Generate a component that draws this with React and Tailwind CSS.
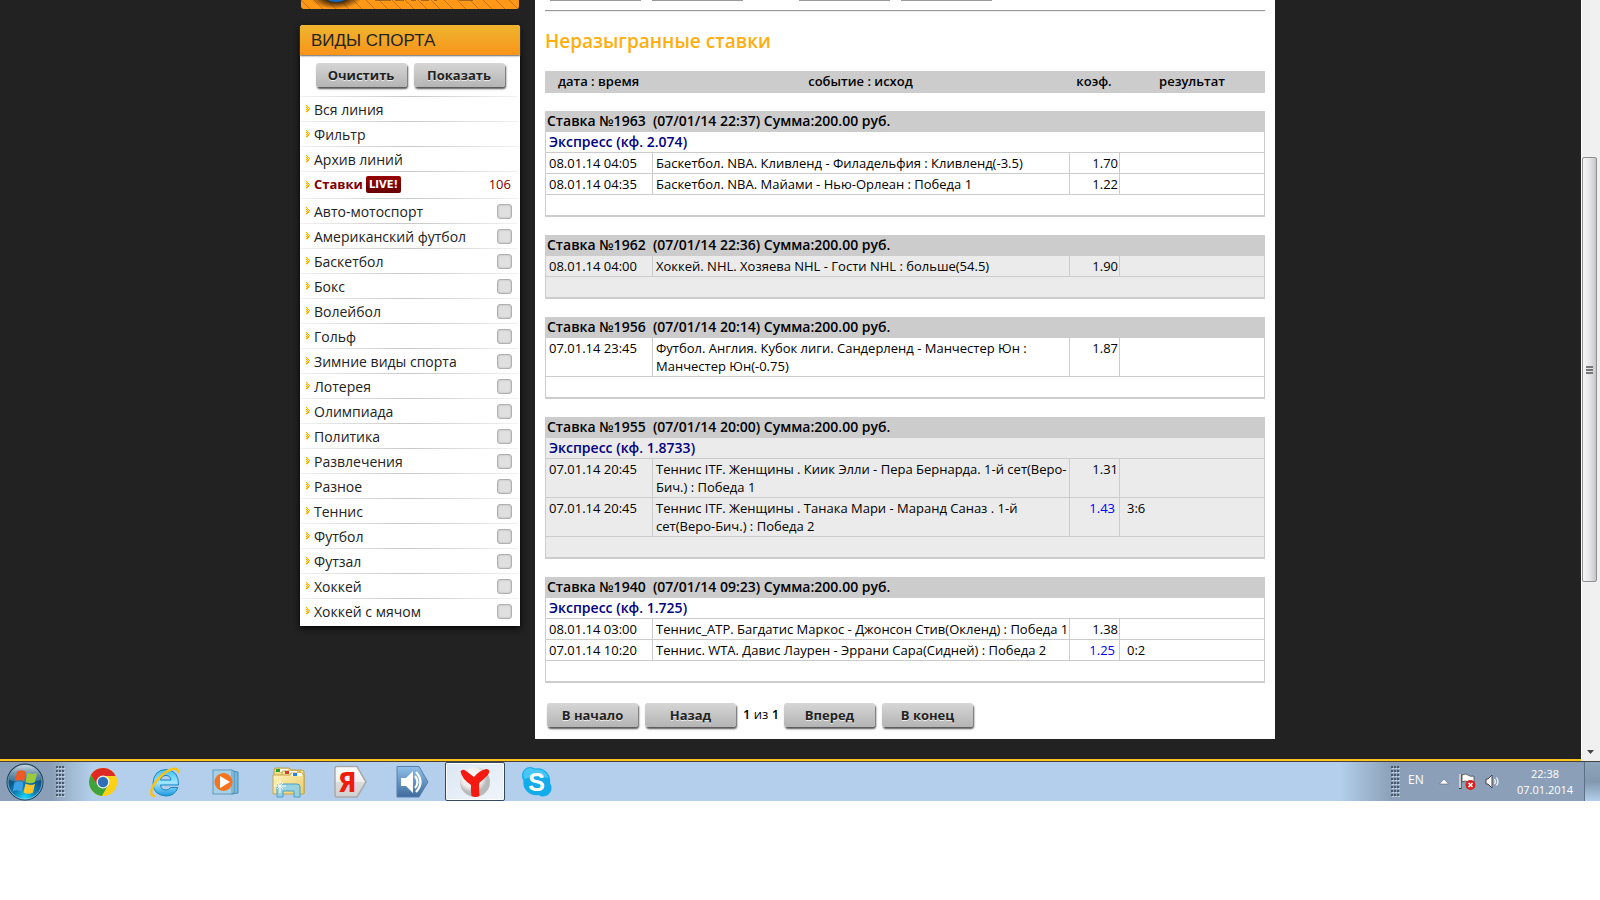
const MENU = ["Вся линия", "Фильтр", "Архив линий"];

const SPORTS = [
  "Авто-мотоспорт", "Американский футбол", "Баскетбол", "Бокс", "Волейбол", "Гольф",
  "Зимние виды спорта", "Лотерея", "Олимпиада", "Политика", "Развлечения", "Разное",
  "Теннис", "Футбол", "Футзал", "Хоккей", "Хоккей с мячом",
];

const BETS = [
  {
    id: 1963, date: "07/01/14 22:37", express: "2.074",
    rows: [
      { time: "08.01.14 04:05", event: "Баскетбол. NBA. Кливленд - Филадельфия : Кливленд(-3.5)", k: "1.70" },
      { time: "08.01.14 04:35", event: "Баскетбол. NBA. Майами - Нью-Орлеан : Победа 1", k: "1.22" },
    ],
  },
  {
    id: 1962, date: "07/01/14 22:36",
    rows: [{ time: "08.01.14 04:00", event: "Хоккей. NHL. Хозяева NHL - Гости NHL : больше(54.5)", k: "1.90" }],
  },
  {
    id: 1956, date: "07/01/14 20:14",
    rows: [{ time: "07.01.14 23:45", event: ["Футбол. Англия. Кубок лиги. Сандерленд - Манчестер Юн :", "Манчестер Юн(-0.75)"], k: "1.87" }],
  },
  {
    id: 1955, date: "07/01/14 20:00", express: "1.8733",
    rows: [
      { time: "07.01.14 20:45", event: ["Теннис ITF. Женщины . Киик Элли - Пера Бернарда. 1-й сет(Веро-", "Бич.) : Победа 1"], k: "1.31" },
      { time: "07.01.14 20:45", event: ["Теннис ITF. Женщины . Танака Мари - Маранд Саназ . 1-й", "сет(Веро-Бич.) : Победа 2"], k: "1.43", result: "3:6" },
    ],
  },
  {
    id: 1940, date: "07/01/14 09:23", express: "1.725",
    rows: [
      { time: "08.01.14 03:00", event: "Теннис_ATP. Багдатис Маркос - Джонсон Стив(Окленд) : Победа 1", k: "1.38" },
      { time: "07.01.14 10:20", event: "Теннис. WTA. Давис Лаурен - Эррани Сара(Сидней) : Победа 2", k: "1.25", result: "0:2" },
    ],
  },
];

function GreyButton({ children }) {
  return (
    <button
      type="button"
      className="h-6 w-[91px] rounded-[3px] bg-linear-to-b from-[#d6d6d6] to-[#b4b4b4] text-center text-[13px] leading-6 font-bold text-[#222] shadow-[1px_2px_2px_#555] [text-shadow:0_1px_0_#eee]"
    >
      {children}
    </button>
  );
}

function Marker() {
  return (
    <svg width="5" height="8" viewBox="0 0 5 8" className="shrink-0" aria-hidden="true">
      <path d="M0 0h1v1h1v1h1v1h1v2h-1v1h-1v1h-1v1h-1z" fill="#ffe9ae" />
      <path
        d="M0 0h1v1h-1zM1 1h1v1h-1zM0 2h1v1h-1zM2 2h1v1h-1zM1 3h1v1h-1zM3 3h1v1h-1zM0 4h1v1h-1zM2 4h1v1h-1zM1 5h1v1h-1zM0 6h1v1h-1zM2 5h1v1h-1zM1 6h1v1h-1z"
        fill="#f9b000"
      />
    </svg>
  );
}

function Divider() {
  return <div className="mr-[2px] h-px bg-linear-to-r from-[#f2f2f2] via-[#c8c8c8] to-[#f2f2f2]" />;
}

function Banner() {
  return (
    <svg className="mx-px block h-[9px] w-[218px]" viewBox="0 0 218 9" aria-hidden="true">
      <defs>
        <pattern id="stripes" width="13" height="13" patternUnits="userSpaceOnUse">
          <path d="M-1 -1L14 14" stroke="#c97410" strokeWidth="1" />
        </pattern>
        <radialGradient id="halo">
          <stop offset="0.4" stopColor="#3a2203" />
          <stop offset="1" stopColor="#3a2203" stopOpacity="0" />
        </radialGradient>
        <clipPath id="bannerClip"><path d="M0 -9h218V6a3 3 0 0 1-3 3H3a3 3 0 0 1-3-3z" /></clipPath>
      </defs>
      <g clipPath="url(#bannerClip)">
        <rect width="218" height="9" fill="#ff9717" />
        <rect width="218" height="9" fill="url(#stripes)" />
        <ellipse cx="35" cy="-3" rx="26" ry="12" fill="url(#halo)" />
        <ellipse cx="35" cy="-11" rx="17" ry="13" fill="#1268c4" />
        <path d="M74 0h16M94 0h9M110 0h5M120 0h8M133 0h3M158 0h14" stroke="#8a5a1c" strokeWidth="1.500" />
      </g>
    </svg>
  );
}

function Sidebar() {
  return (
    <aside className="w-[220px] shrink-0">
      <Banner />
      <div className="mt-4 rounded-t-[3px] bg-white shadow-[0_2px_6px_#000]">
        <h2 className="h-[30px] rounded-t-[3px] bg-linear-to-b from-[#edb52e] to-[#f8941a] pl-[11px] font-['Liberation_Sans',sans-serif] text-[17px] leading-8 text-[#222] shadow-[0_1px_2px_#666]">
          ВИДЫ СПОРТА
        </h2>
        <div className="flex h-[41px] items-start justify-center gap-[7px] pt-2">
          <GreyButton>Очистить</GreyButton>
          <GreyButton>Показать</GreyButton>
        </div>
        <nav className="text-[14px] text-[#222]">
          {MENU.map((item) => (
            <div key={item}>
              <Divider />
              <a href="#" className="flex h-6 items-center gap-[3px] pl-[6px]">
                <Marker />
                {item}
              </a>
            </div>
          ))}
          <Divider />
          <a href="#" className="flex h-[26px] items-center gap-[3px] pr-[9px] pb-px pl-[6px] text-[13px] font-bold text-[#800000]">
            <Marker />
            Ставки
            <span className="h-[17px] rounded-[2px] bg-linear-to-b from-[#900] to-[#600] px-[3px] font-['DejaVu_Sans',sans-serif] text-[10px] leading-[17px] font-bold text-white">
              LIVE!
            </span>
            <span className="ml-auto font-normal">106</span>
          </a>
          {SPORTS.map((sport) => (
            <div key={sport}>
              <Divider />
              <label className="flex h-6 items-center gap-[3px] pr-2 pl-[6px]">
                <Marker />
                {sport}
                <input
                  type="checkbox"
                  className="ml-auto size-[15px] appearance-none rounded-[3px] border border-[#b0b0b0] bg-[#e0e0e0] shadow-[inset_0_0_2px_#aaa]"
                />
              </label>
            </div>
          ))}
          <div className="h-[3px]" />
        </nav>
      </div>
    </aside>
  );
}

function Bet({ bet, shaded }) {
  const bg = shaded ? "bg-[#ebebeb]" : "bg-white";
  return (
    <tbody className={bg}>
      <tr className="h-[18px] bg-white">
        <td colSpan={4} />
      </tr>
      <tr className="h-[21px] bg-[#ccc] text-[14px]">
        <th colSpan={4} className="pb-px pl-[2px] text-left font-semibold whitespace-pre">
          {`Ставка №${bet.id}  (${bet.date}) Сумма:200.00 руб.`}
        </th>
      </tr>
      {bet.express && (
        <tr className="h-[21px] text-[14px]">
          <td colSpan={4} className="border-x border-b border-[#ccc] pl-[3px] font-semibold text-[#000080]">
            Экспресс (кф. {bet.express})
          </td>
        </tr>
      )}
      {bet.rows.map((row) => (
        <tr key={row.time + row.event} className="align-top">
          <td className="border-b border-l border-[#ccc] py-px pl-[3px]">{row.time}</td>
          <td className="border-b border-l border-[#ccc] py-px pl-[3px] whitespace-nowrap">
            {[].concat(row.event).map((line) => (
              <div key={line}>{line}</div>
            ))}
          </td>
          <td className={`border-b border-l border-[#ccc] py-px text-right ${row.result ? "pr-1 text-[#0000ff]" : "pr-px"}`}>
            {row.k}
          </td>
          <td className="border-x border-b border-[#ccc] py-px pl-[7px]">{row.result}</td>
        </tr>
      ))}
      <tr className="h-[22px]">
        <td colSpan={4} className="border-x border-b-2 border-[#ccc]" />
      </tr>
    </tbody>
  );
}

function Main() {
  return (
    <main className="w-[740px] shrink-0 bg-white px-[10px] pb-3 text-black">
      <div className="flex pl-[5px]" aria-hidden="true">
        <span className="mr-[11px] h-px w-[91px] bg-[#999]" />
        <span className="mr-14 h-px w-[91px] bg-[#999]" />
        <span className="mr-[11px] h-px w-[91px] bg-[#999]" />
        <span className="h-px w-[91px] bg-[#999]" />
      </div>
      <hr className="mt-[9px] h-[2px] border-t border-b border-t-[#999] border-b-[#eee]" />
      <h1 className="mt-4 mb-4 h-[27px] text-[19px] leading-[27px] font-semibold text-[#ffae0d]">Неразыгранные ставки</h1>
      <table className="w-full table-fixed border-separate border-spacing-0 text-[13px] leading-[18px]">
        <colgroup>
          <col className="w-[107px]" />
          <col />
          <col className="w-[50px]" />
          <col className="w-[146px]" />
        </colgroup>
        <thead>
          <tr className="h-[22px] bg-[#ccc]">
            <th className="pb-[2px] font-semibold">дата : время</th>
            <th className="pb-[2px] font-semibold">событие : исход</th>
            <th className="pb-[2px] font-semibold">коэф.</th>
            <th className="pb-[2px] font-semibold">результат</th>
          </tr>
        </thead>
        {BETS.map((bet, i) => (
          <Bet key={bet.id} bet={bet} shaded={i % 2 === 1} />
        ))}
      </table>
      <div className="mt-5 flex items-center gap-[7px] pl-[2px] text-[13px]">
        <GreyButton>В начало</GreyButton>
        <GreyButton>Назад</GreyButton>
        <span className="w-[34px] text-center whitespace-nowrap">
          <b className="font-semibold">1</b> из <b className="font-semibold">1</b>
        </span>
        <GreyButton>Вперед</GreyButton>
        <GreyButton>В конец</GreyButton>
      </div>
    </main>
  );
}

function Scrollbar() {
  return (
    <div className="flex w-[19px] shrink-0 flex-col border-l border-white bg-[#f0f0f0] pt-[157px] pb-[3px]">
      <div className="flex h-[425px] w-[15px] flex-col items-center justify-center gap-px rounded-[2px] border border-[#8f8f8f] bg-linear-to-r from-[#f7f7f7] via-[#e6e6e8] to-[#c4c4cb]">
        <span className="h-[2px] w-[7px] bg-[#777]" />
        <span className="h-[2px] w-[7px] bg-[#777]" />
        <span className="h-[2px] w-[7px] bg-[#777]" />
      </div>
      <svg className="mt-auto ml-[5px]" width="8" height="8" viewBox="0 0 8 8" aria-hidden="true">
        <path d="M0 0h7L3.500 4z" fill="#444" />
      </svg>
    </div>
  );
}

function Grip() {
  return (
    <svg width="9" height="31" viewBox="0 0 9 31" aria-hidden="true">
      <defs>
        <pattern id="dots" width="3" height="4" patternUnits="userSpaceOnUse">
          <rect width="2" height="2" fill="#4a5968" />
          <rect x="1" y="2" width="2" height="1" fill="#c5d2df" />
        </pattern>
      </defs>
      <rect width="9" height="31" fill="url(#dots)" />
    </svg>
  );
}

function StartOrb() {
  return (
    <svg width="38" height="38" viewBox="0 0 38 38" aria-hidden="true">
      <defs>
        <radialGradient id="orb" cx="0.5" cy="0.95" r="0.8">
          <stop offset="0" stopColor="#15e0ff" />
          <stop offset="0.4" stopColor="#0d7db4" />
          <stop offset="1" stopColor="#0b3b60" />
        </radialGradient>
        <linearGradient id="orbGloss" x2="0" y2="1">
          <stop offset="0" stopColor="#dfeaf2" stopOpacity="0.9" />
          <stop offset="1" stopColor="#7fa5c0" stopOpacity="0.35" />
        </linearGradient>
      </defs>
      <circle cx="19" cy="19" r="18" fill="url(#orb)" stroke="#1c3b55" />
      <circle cx="19" cy="19" r="17" fill="none" stroke="#a5cbe2" strokeOpacity="0.7" />
      <path d="M3 17a16 15 0 0 1 32 0q-16 5-32 0z" fill="url(#orbGloss)" />
      <path d="M11 8.500q5-2.500 9 .5l-2 9.500q-4-2.500-9-.5z" fill="#ee5a24" />
      <path d="M21.500 9.500q4 2.500 9.500.5l-2 9q-5 2.500-9.500 0z" fill="#9acb3c" />
      <path d="M8.500 19.500q5-2 9 .5l-2 9q-4-3-9-.5z" fill="#3aa0e8" />
      <path d="M19.500 20.500q4.500 2.500 9.500.5l-2 8.500q-5 2.500-9.500 0z" fill="#ffc62a" />
    </svg>
  );
}

function ChromeIcon() {
  return (
    <svg width="30" height="30" viewBox="0 0 30 30" aria-hidden="true">
      <circle cx="15" cy="15" r="14" fill="#fdd302" />
      <path d="M2.900 8A14 14 0 0 1 27.600 9H15L9 18z" fill="#dd2a22" />
      <path d="M2.900 8A14 14 0 0 0 14 29l6.500-11H9.500z" fill="#3fa33c" />
      <path d="M14 29a14 14 0 0 0 13.600-20H15l5.500 9z" fill="#fcd116" />
      <circle cx="15" cy="15" r="6.500" fill="#f3f3f3" />
      <circle cx="15" cy="15" r="5.200" fill="#2f6fb8" />
    </svg>
  );
}

function ExplorerEIcon() {
  return (
    <svg width="32" height="32" viewBox="0 0 32 32" aria-hidden="true">
      <defs>
        <linearGradient id="ie" x2="0" y2="1">
          <stop offset="0" stopColor="#3ec0f4" />
          <stop offset="0.5" stopColor="#a0e6ff" />
          <stop offset="1" stopColor="#1a9ae0" />
        </linearGradient>
      </defs>
      <path d="M29.500 19H11.500q.5 5 5.500 5 3 0 4.500-2.500h7.300Q26 30 17 30 4 29 4 17 5 4 17 3.500 30 4.500 29.500 19zM11.500 14H22q-.5-4.500-5-4.500T11.500 14z" fill="url(#ie)" stroke="#1684c4" />
      <path d="M6 30C-1 31 2 20 11 11S30 0 29.500 7" fill="none" stroke="#f6c21c" strokeWidth="2.500" />
    </svg>
  );
}

function PlayerIcon() {
  return (
    <svg width="30" height="28" viewBox="0 0 30 28" aria-hidden="true">
      <path d="M20 3l6 1v21l-6 1z" fill="#79b7da" stroke="#4b8fb5" />
      <path d="M18 2l4 1v22l-4 1z" fill="#a9d8ee" stroke="#4b8fb5" />
      <rect x="1" y="2" width="19" height="24" fill="#a5d0e6" stroke="#6299b8" />
      <circle cx="11.500" cy="14" r="9" fill="#f4731c" />
      <path d="M8 8v12l10-6z" fill="#fff" />
    </svg>
  );
}

function FolderIcon() {
  return (
    <svg width="34" height="32" viewBox="0 0 34 32" aria-hidden="true">
      <defs>
        <linearGradient id="folder" x2="1" y2="1">
          <stop offset="0" stopColor="#fdf3bf" />
          <stop offset="1" stopColor="#ecce66" />
        </linearGradient>
      </defs>
      <path d="M2 27V4q0-2 2-2h13l2 2h11q2 0 2 2v21z" fill="#f1dc8c" stroke="#bf9f45" />
      <rect x="4" y="3" width="12" height="3" fill="#fff" />
      <rect x="4" y="3" width="4" height="3" fill="#1fa51f" />
      <path d="M10 9V6q0-1 1-1h17v4" fill="#f6e5a0" stroke="#bf9f45" />
      <rect x="13" y="5" width="12" height="3" fill="#fff" />
      <rect x="13" y="5" width="4" height="3" fill="#d8402b" />
      <path d="M1 9h17l1-2h11l2 2v19H1z" fill="url(#folder)" stroke="#c4a44a" />
      <rect x="20" y="7" width="10" height="3" fill="#fff" />
      <rect x="21" y="7" width="4" height="3" fill="#2288dd" />
      <path d="M5 31V21q0-3 3-3h17q3 0 3 3v10h-6v-6H11v6z" fill="#8fd0ea" fillOpacity="0.900" stroke="#4c9fc4" />
      <path d="M8 14v13M2 20h12M5 17l6 6M11 17l-6 6" stroke="#fff" strokeWidth="1" />
    </svg>
  );
}

function YandexTagIcon() {
  return (
    <svg width="34" height="34" viewBox="0 0 34 34" aria-hidden="true">
      <defs>
        <linearGradient id="tag" x2="0" y2="1">
          <stop offset="0" stopColor="#fff" />
          <stop offset="0.5" stopColor="#f0f0f0" />
          <stop offset="0.520" stopColor="#dcdcdc" />
          <stop offset="1" stopColor="#d0d0d0" />
        </linearGradient>
      </defs>
      <path d="M3 1.500h20l9 15.500-9 15H3q-2 0-2-2V3.500q0-2 2-2z" fill="url(#tag)" stroke="#a9a9a9" strokeWidth="1.500" />
      <text x="13" y="27" textAnchor="middle" fontFamily="DejaVu Sans Condensed, DejaVu Sans, sans-serif" fontWeight="700" fontSize="27" fill="#ee1c0c">Я</text>
    </svg>
  );
}

function VolumeTagIcon() {
  return (
    <svg width="34" height="34" viewBox="0 0 34 34" aria-hidden="true">
      <defs>
        <linearGradient id="vol" x2="0" y2="1">
          <stop offset="0" stopColor="#8fbfea" />
          <stop offset="1" stopColor="#3e6b9c" />
        </linearGradient>
      </defs>
      <path d="M1 1.500h22l9 15.500-9 15H1z" fill="url(#vol)" stroke="#5780ab" />
      <path d="M5 13h5l7-7v22l-7-7H5z" fill="#fff" />
      <path d="M19 11q5 6 0 12M20 7q9 10 0 20" fill="none" stroke="#fff" strokeWidth="2.200" />
    </svg>
  );
}

function YandexBrowserIcon() {
  return (
    <svg width="32" height="32" viewBox="0 0 32 32" aria-hidden="true">
      <defs>
        <radialGradient id="ball" cx="0.4" cy="0.35">
          <stop offset="0" stopColor="#fff" />
          <stop offset="0.7" stopColor="#ececec" />
          <stop offset="1" stopColor="#b9b9b9" />
        </radialGradient>
      </defs>
      <circle cx="16" cy="16" r="15" fill="url(#ball)" />
      <path d="M1.500 5.500q2-3 5.500-.5l8 6q6-7 12-8 4 0 3 4Q28 11 20.500 16.500l-.5 3q0 6 .5 10.500-4 2-8 0-1-6-.5-11Q3 13 1.500 5.500z" fill="#f71a10" />
    </svg>
  );
}

function SkypeIcon() {
  return (
    <svg width="32" height="32" viewBox="0 0 32 32" aria-hidden="true">
      <path d="M8.500 1q4 0 5.500 1.500 7-1.500 11.500 3.500 4.500 4.500 3.500 11 2 3 1.500 6-1.500 7-8 7.500-3 0-5-1.500-7 1-11.500-3.500Q1.500 21 2.500 14.500.5 12 1 8 2.500 2 8.500 1z" fill="#12acec" />
      <path d="M8.500 2q3 0 5 1.500Q24 2 27.500 12 14 9 3 13 .5 3 8.500 2z" fill="#55cdf8" fillOpacity="0.800" />
      <text x="15.500" y="25" textAnchor="middle" fontFamily="Liberation Sans, sans-serif" fontWeight="700" fontSize="25" fill="#fff">S</text>
    </svg>
  );
}

function TaskButton({ label, active, children }) {
  return (
    <button
      type="button"
      aria-label={label}
      className={`flex h-[39px] w-[60px] items-center justify-center ${
        active ? "rounded-[2px] border border-[#34495e] bg-linear-to-br from-[#dbe7f3] to-[#f0f5fa] shadow-[inset_0_0_0_1px_#fff]" : ""
      }`}
    >
      {children}
    </button>
  );
}

function Taskbar() {
  return (
    <footer className="flex h-[39px] items-center bg-[#b3cfeb] font-['Open_Sans',sans-serif] text-white">
      <div className="flex h-full w-[73px] items-center gap-3 bg-linear-to-r from-[#8ba0b8] from-70% to-[#a3bcd5] pl-[6px]">
        <button type="button" aria-label="Пуск"><StartOrb /></button>
        <Grip />
      </div>
      <div className="flex items-center gap-[2px] bg-linear-to-r from-[#a3bcd5] to-[#b3cfeb] to-4%">
        <TaskButton label="Google Chrome"><ChromeIcon /></TaskButton>
        <TaskButton label="Internet Explorer"><ExplorerEIcon /></TaskButton>
        <TaskButton label="Проигрыватель"><PlayerIcon /></TaskButton>
        <TaskButton label="Проводник"><FolderIcon /></TaskButton>
        <TaskButton label="Яндекс"><YandexTagIcon /></TaskButton>
        <TaskButton label="Громкость"><VolumeTagIcon /></TaskButton>
        <TaskButton label="Яндекс.Браузер" active><YandexBrowserIcon /></TaskButton>
        <TaskButton label="Skype"><SkypeIcon /></TaskButton>
      </div>
      <div className="ml-auto flex h-full w-[260px] items-center bg-linear-to-r from-[#b3cfeb] to-[#8ba0b8] to-20% pl-[51px]">
        <Grip />
        <span className="ml-2 w-6 pb-1 text-[12px]">EN</span>
        <svg className="ml-[7px]" width="10" height="6" viewBox="0 0 10 6" aria-hidden="true">
          <path d="M5 0L9.500 5H.5z" fill="#fff" stroke="#4d5c6c" strokeWidth="0.500" />
        </svg>
        <svg className="ml-[10px]" width="17" height="18" viewBox="0 0 17 18" aria-hidden="true">
          <path d="M1 1v15" stroke="#333" strokeWidth="3" />
          <path d="M1 1v14" stroke="#fff" strokeWidth="1.500" />
          <path d="M3 2q4-2 6 0t6 1v7q-4 1-6-1t-6 0z" fill="#fff" stroke="#444" strokeWidth="0.800" />
          <circle cx="11.500" cy="12" r="5" fill="#d8201c" />
          <path d="M9.500 10l4 4M13.500 10l-4 4" stroke="#fff" strokeWidth="1.600" />
        </svg>
        <svg className="ml-[9px]" width="14" height="15" viewBox="0 0 14 15" aria-hidden="true">
          <path d="M1 5h2l4-4v13l-4-4H1z" fill="#fff" stroke="#444" />
          <path d="M9.500 5q1.500 2.500 0 5M11.500 3.500q3 4 0 8" fill="none" stroke="#fff" strokeWidth="1.200" />
        </svg>
        <time className="ml-auto flex w-[78px] flex-col text-center text-[11px] leading-4">
          <span>22:38</span>
          <span>07.01.2014</span>
        </time>
        <button type="button" aria-label="Свернуть все окна" className="h-full w-4 shrink-0 border-l border-[#5d7186] bg-linear-to-b from-[#8ea5bc] via-[#8198af] to-[#b3cfeb]" />
      </div>
    </footer>
  );
}

export default function App() {
  return (
    <div className="min-h-screen bg-white font-['Open_Sans','Noto_Sans',sans-serif]">
      <div className="flex border-b border-[#44423a] bg-[#222]">
        <div className="min-w-0 flex-1 border-b-2 border-[#ffc31f]">
          <div className="mx-auto flex max-w-[981px] items-start gap-[15px] pb-5">
            <Sidebar />
            <Main />
          </div>
        </div>
        <Scrollbar />
      </div>
      <Taskbar />
    </div>
  );
}
